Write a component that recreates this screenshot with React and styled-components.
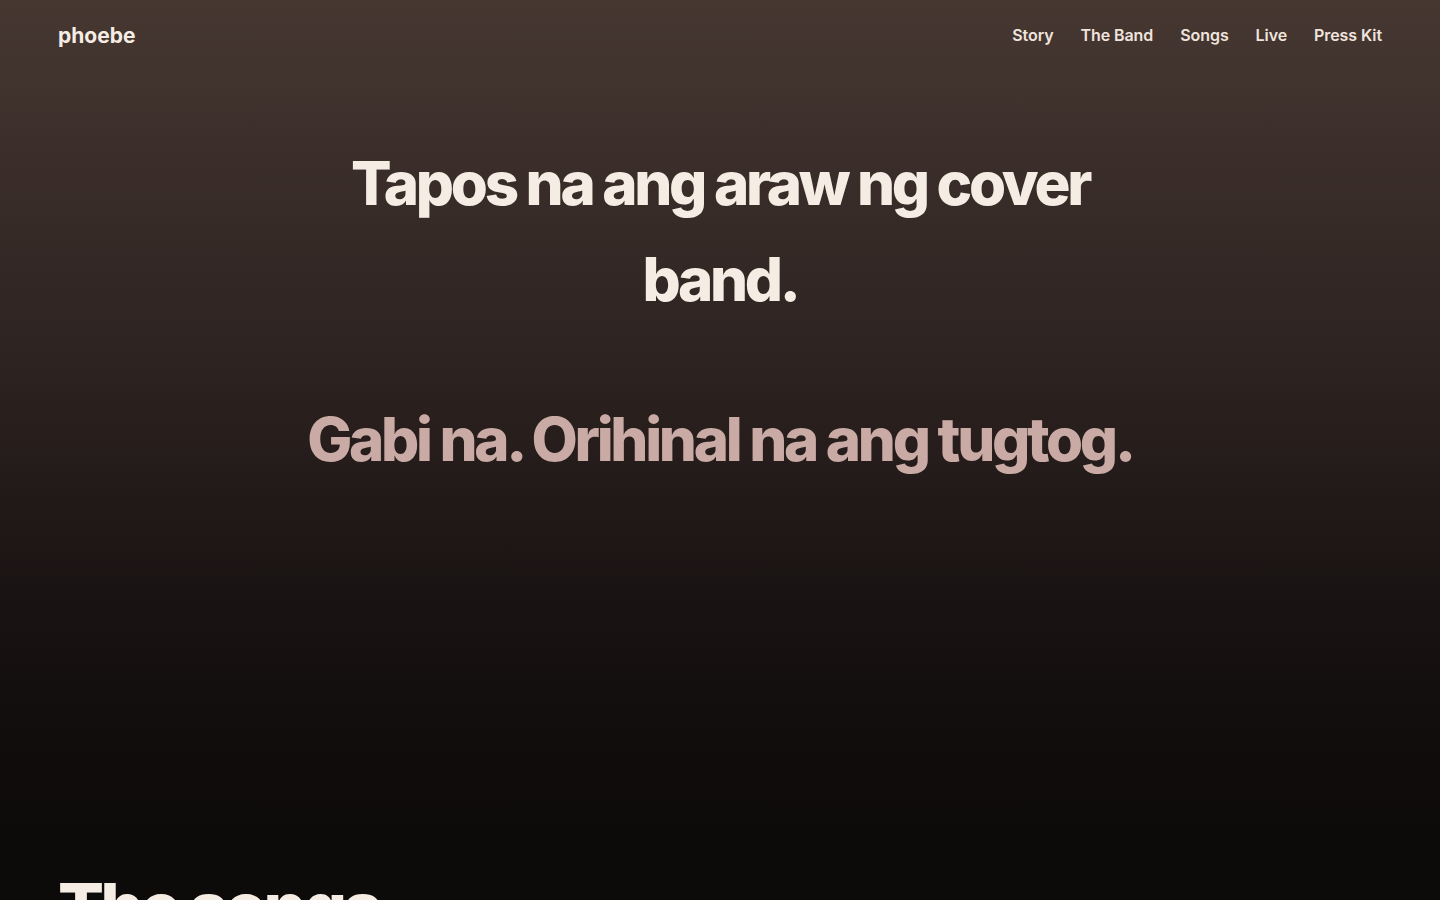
import React from 'react';
import styled, { createGlobalStyle } from 'styled-components';

const font = '"Inter", "Liberation Sans", sans-serif';

const GlobalStyle = createGlobalStyle`
    html, body {
        margin: 0;
        padding: 0;
        background: #0d0a0a;
    }
    body {
        font-family: ${font};
        color: #f5ece4;
    }
`;

const Page = styled.div`
    min-height: 100vh;
    background: linear-gradient(180deg, #463731 0%, #2c2220 40%, #181212 65%, #0d0a0a 88%, #0d0a0a 100%);
`;

const Header = styled.header`
    display: flex;
    align-items: center;
    justify-content: space-between;
    padding: 20px 58px 0 58px;
    height: 30px;
`;

const Logo = styled.a`
    font-size: 21px;
    font-weight: 700;
    letter-spacing: 0;
    color: #f5ece4;
    text-decoration: none;
`;

const Nav = styled.nav`
    display: flex;
    gap: 27px;
`;

const NavLink = styled.a`
    font-size: 16px;
    font-weight: 600;
    letter-spacing: -0.005em;
    color: #f0e4de;
    text-decoration: none;
`;

const Hero = styled.section`
    display: flex;
    flex-direction: column;
    align-items: center;
    padding: 85px 0 0;
    height: 760px;
    box-sizing: border-box;
`;

const Headline = styled.h1`
    margin: 0;
    max-width: 760px;
    text-align: center;
    font-size: 60px;
    line-height: 96px;
    font-weight: 800;
    letter-spacing: -0.055em;
    color: ${(p) => p.$color};
`;

const Sub = styled(Headline).attrs({ as: 'p' })`
    max-width: none;
    margin-top: 64px;
`;

const Songs = styled.section`
    padding: 63px 58px 0;
`;

const SongsTitle = styled.h2`
    margin: 0;
    font-size: 68px;
    font-weight: 800;
    letter-spacing: -0.05em;
    line-height: 1;
    color: #f5ece4;
`;

const links = ['Story', 'The Band', 'Songs', 'Live', 'Press Kit'];

export default function App() {
    return (
        <Page>
            <GlobalStyle />
            <Header>
                <Logo href="#">phoebe</Logo>
                <Nav>
                    {links.map((l) => (
                        <NavLink key={l} href="#">
                            {l}
                        </NavLink>
                    ))}
                </Nav>
            </Header>
            <Hero>
                <Headline $color="#f5ece4">
                    Tapos na ang araw ng cover band.
                </Headline>
                <Sub $color="#c9aaa4">Gabi na. Orihinal na ang tugtog.</Sub>
            </Hero>
            <Songs>
                <SongsTitle>The songs</SongsTitle>
            </Songs>
        </Page>
    );
}
